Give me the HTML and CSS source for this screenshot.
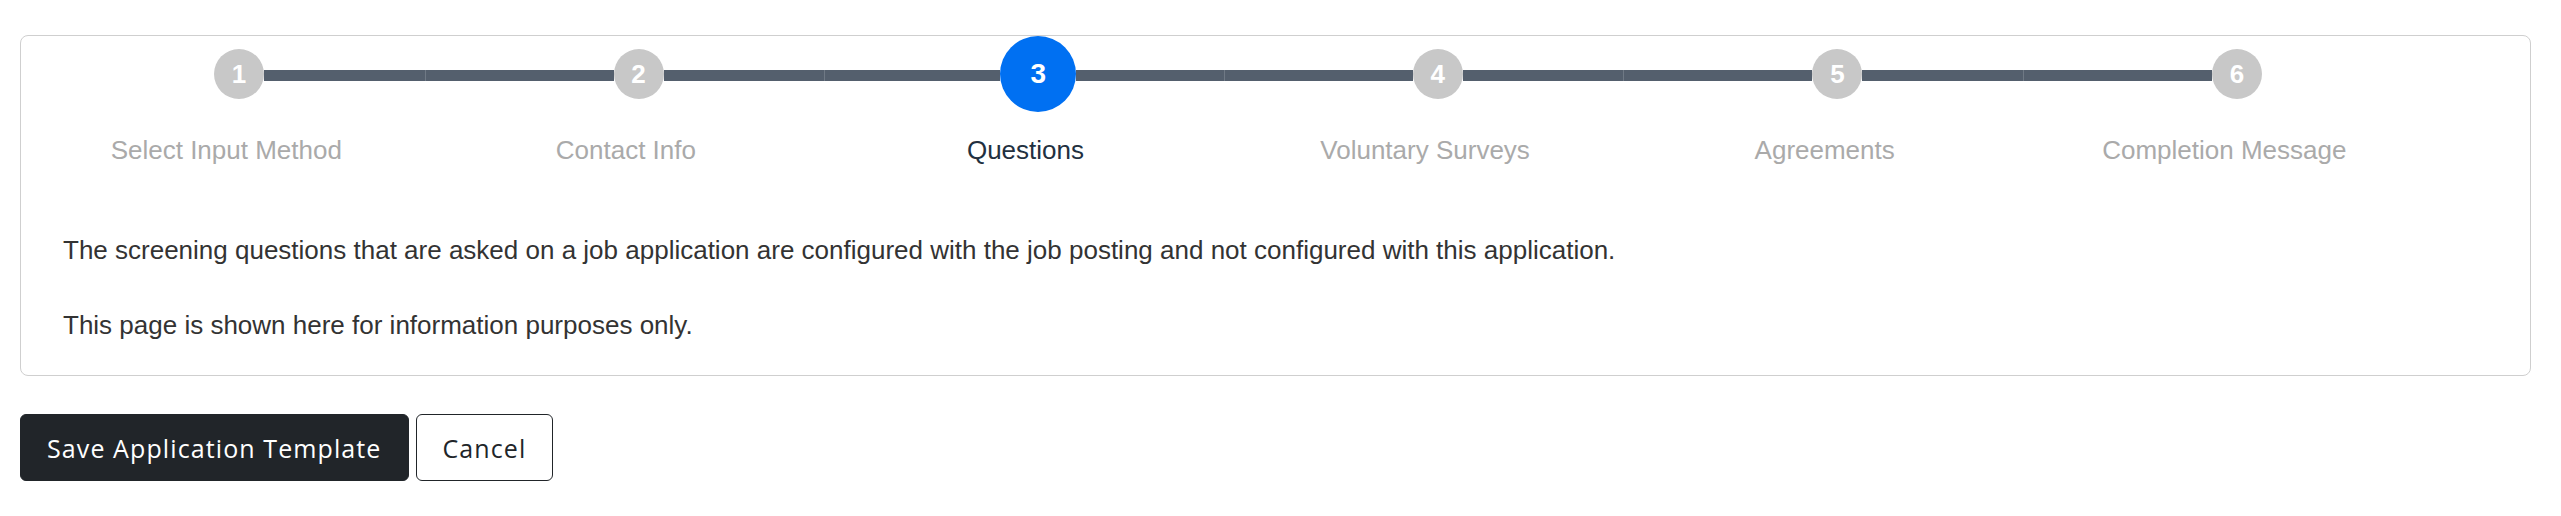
FILE: index.html
```html
<!DOCTYPE html>
<html lang="en">
<head>
<meta charset="utf-8">
<title>Application Template - Questions</title>
<link rel="stylesheet" href="styles.css">
</head>
<body>
<div class="page">
  <div class="card">
    <ol class="stepper">
      <li class="step first">
        <div class="track"><span class="seg seg-left"></span><span class="dot">1</span><span class="seg seg-right"></span></div>
        <div class="label">Select Input Method</div>
      </li>
      <li class="step">
        <div class="track"><span class="seg seg-left"></span><span class="dot">2</span><span class="seg seg-right"></span></div>
        <div class="label">Contact Info</div>
      </li>
      <li class="step active">
        <div class="track"><span class="seg seg-left"></span><span class="dot">3</span><span class="seg seg-right"></span></div>
        <div class="label">Questions</div>
      </li>
      <li class="step">
        <div class="track"><span class="seg seg-left"></span><span class="dot">4</span><span class="seg seg-right"></span></div>
        <div class="label">Voluntary Surveys</div>
      </li>
      <li class="step">
        <div class="track"><span class="seg seg-left"></span><span class="dot">5</span><span class="seg seg-right"></span></div>
        <div class="label">Agreements</div>
      </li>
      <li class="step last">
        <div class="track"><span class="seg seg-left"></span><span class="dot">6</span><span class="seg seg-right"></span></div>
        <div class="label">Completion Message</div>
      </li>
    </ol>
    <div class="card-body">
      <p>The screening questions that are asked on a job application are configured with the job posting and not configured with this application.</p>
      <p>This page is shown here for information purposes only.</p>
    </div>
  </div>
  <div class="actions">
    <button type="button" class="btn btn-dark">Save Application Template</button>
    <button type="button" class="btn btn-outline">Cancel</button>
  </div>
</div>
</body>
</html>
```
FILE: styles.css
```css
html, body {
  margin: 0;
  padding: 0;
  background: #ffffff;
}

body {
  font-family: "Liberation Sans", Arial, sans-serif;
  font-size: 26px;
  color: #333333;
}

.page {
  padding: 35px 30px 0 20px;
}

.card {
  border: 1px solid #cfcfcf;
  border-radius: 8px;
  background: #ffffff;
}

.stepper {
  list-style: none;
  margin: 0 0 0 4px;
  padding: 0;
  display: flex;
}

.step {
  width: 399.6px;
  flex: 0 0 399.6px;
  display: flex;
  flex-direction: column;
}

.track {
  height: 76px;
  display: flex;
  align-items: center;
}

.seg {
  height: 11px;
  margin-top: 3px;
  background: #545f6d;
}

.seg-left {
  flex: 0 0 calc(214px - 25px);
  box-sizing: border-box;
  border-left: 1px solid #6f7985;
}

.seg-right {
  flex: 1 1 auto;
}

.first .seg-left,
.last .seg-right {
  background: transparent;
  border-left: 0;
}

.dot {
  flex: 0 0 50px;
  width: 50px;
  height: 50px;
  border-radius: 50%;
  background: #c8c8c8;
  color: #ffffff;
  font-weight: bold;
  font-size: 26px;
  line-height: 50px;
  text-align: center;
}

.active .seg-left {
  flex-basis: calc(214px - 38px);
}

.active .dot {
  flex: 0 0 76px;
  width: 76px;
  height: 76px;
  line-height: 76px;
  background: #0070f2;
  font-size: 28px;
}

.label {
  margin-top: 19.7px;
  padding-left: 3px;
  line-height: 37.5px;
  text-align: center;
  color: #aaaaaa;
  white-space: nowrap;
}

.active .label {
  color: #22303f;
}

.card-body {
  padding: 62.5px 20px 31px 42px;
}

.card-body p {
  margin: 0;
  line-height: 37.5px;
}

.card-body p + p {
  margin-top: 37.5px;
}

.actions {
  margin-top: 38px;
  display: flex;
  gap: 7px;
}

.btn {
  font-family: "Open Sans", "Noto Sans", sans-serif;
  font-size: 25px;
  letter-spacing: 1.1px;
  line-height: 38px;
  padding: 13.5px 26px;
  border-radius: 6px;
  cursor: pointer;
}

.btn-dark {
  background: #212529;
  color: #ffffff;
  border: 1px solid #212529;
}

.btn-outline {
  background: #ffffff;
  color: #212529;
  border: 1px solid #212529;
}
```
